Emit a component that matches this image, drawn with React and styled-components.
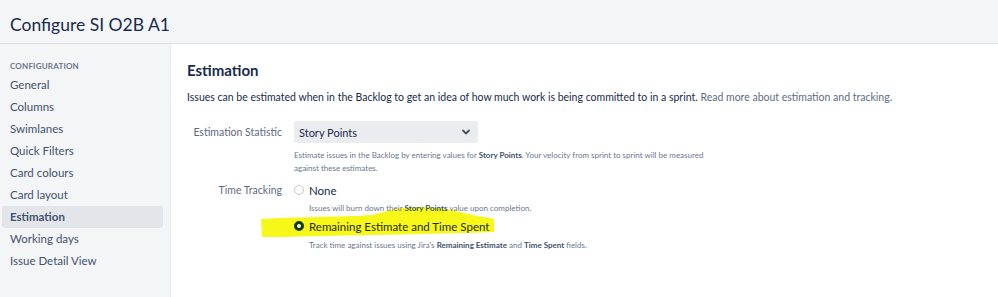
import React from 'react';
import styled, { createGlobalStyle } from 'styled-components';

const GlobalStyle = createGlobalStyle`
  html, body { margin: 0; padding: 0; }
  body {
    font-family: Lato, "Noto Sans", sans-serif;
    color: #172b4d;
    background: #fff;
  }
`;

const Page = styled.div`
  width: 998px;
  height: 297px;
  display: flex;
  flex-direction: column;
  overflow: hidden;
`;

const Header = styled.div`
  height: 44px;
  background: #f4f5f7;
  border-bottom: 1px solid #dfe1e6;
  display: flex;
  align-items: center;
  padding: 0 10px;
  box-sizing: border-box;
`;

const Title = styled.h1`
  margin: 0;
  font-size: 17.5px;
  font-weight: 400;
  color: #172b4d;
  padding-top: 6px;
`;

const Body = styled.div`
  flex: 1;
  display: flex;
`;

const Sidebar = styled.div`
  width: 171px;
  background: #f4f5f7;
  border-right: 1px solid #ebecf0;
  padding: 17px 7px 0 2px;
  box-sizing: border-box;
`;

const SideHeading = styled.div`
  font-size: 8px;
  font-weight: 700;
  color: #6b778c;
  padding-left: 8px;
  margin-bottom: 3px;
  letter-spacing: 0.2px;
`;

const SideItem = styled.div`
  height: 22px;
  line-height: 22px;
  font-size: 11.5px;
  padding-left: 8px;
  border-radius: 3px;
  color: #42526e;
  font-weight: ${(p) => (p.active ? 700 : 400)};
  background: ${(p) => (p.active ? '#e4e5ea' : 'transparent')};
`;

const Main = styled.div`
  flex: 1;
  position: relative;
  padding: 15px 0 0 16px;
`;

const Heading = styled.h2`
  margin: 0;
  font-size: 15px;
  font-weight: 700;
  color: #172b4d;
  line-height: 22px;
`;

const Intro = styled.p`
  margin: 8px 0 0;
  font-size: 10.5px;
  line-height: 16px;
  color: #172b4d;
`;

const Muted = styled.span`
  color: #5e6c84;
`;

const Form = styled.div`
  margin-top: 16px;
  display: grid;
  grid-template-columns: 95px 1fr;
  column-gap: 12px;
  row-gap: 4px;
`;

const Label = styled.div`
  text-align: right;
  font-size: 10.5px;
  color: #5e6c84;
  line-height: 22px;
`;

const Field = styled.div`
  display: flex;
  flex-direction: column;
`;

const Select = styled.div`
  width: 184px;
  height: 22px;
  background: #ebecf0;
  border-radius: 3px;
  display: flex;
  align-items: center;
  justify-content: space-between;
  padding: 0 7px 0 5px;
  box-sizing: border-box;
  font-size: 11px;
  color: #172b4d;
`;

const Help = styled.div`
  font-size: 8px;
  line-height: 13px;
  color: #6b778c;
  margin-top: ${(p) => p.top || 4}px;
  padding-left: ${(p) => p.indent || 0}px;
  max-width: 440px;
  position: relative;
  z-index: 1;
  b { color: #42526e; font-weight: 700; }
`;

const RadioRow = styled.label`
  display: flex;
  align-items: center;
  gap: 5px;
  height: 22px;
  font-size: 11.5px;
  color: ${(p) => (p.marked ? '#1d2b12' : '#172b4d')};
  position: relative;
  z-index: 1;
`;

const Radio = styled.span`
  width: 10px;
  height: 10px;
  border-radius: 50%;
  box-sizing: border-box;
  border: ${(p) => (p.checked ? '3px solid #143a10' : '1px solid #c1c7d0')};
  background: ${(p) => (p.checked ? '#fdfdd0' : '#fff')};
`;

const Marker = styled.svg`
  position: absolute;
  left: 90px;
  top: 162px;
  width: 234px;
  height: 32px;
  pointer-events: none;
  z-index: 0;
`;

const Chevron = () => (
  <svg width="10" height="10" viewBox="0 0 10 10">
    <path d="M2 3.5 L5 6.5 L8 3.5" fill="none" stroke="#42526e" strokeWidth="1.8" strokeLinecap="round" strokeLinejoin="round" />
  </svg>
);

const items = [
  'General',
  'Columns',
  'Swimlanes',
  'Quick Filters',
  'Card colours',
  'Card layout',
  'Estimation',
  'Working days',
  'Issue Detail View',
];

export default function App() {
  return (
    <Page>
      <GlobalStyle />
      <Header>
        <Title>Configure SI O2B A1</Title>
      </Header>
      <Body>
        <Sidebar>
          <SideHeading>CONFIGURATION</SideHeading>
          {items.map((item) => (
            <SideItem key={item} active={item === 'Estimation'}>
              {item}
            </SideItem>
          ))}
        </Sidebar>
        <Main>
          <Marker viewBox="0 0 234 32">
            <path
              d="M0 13 C30 11 80 11 112 9 C128 4 140 1 160 1 C180 1 200 6 216 10 C224 11 230 12 233 13 L233 26 C200 27 130 29 60 30 C30 31 10 31 1 31 Z"
              fill="#f7f71a"
            />
          </Marker>
          <Heading>Estimation</Heading>
          <Intro>
            Issues can be estimated when in the Backlog to get an idea of how much work is being committed to in a sprint.{' '}
            <Muted>Read more about estimation and tracking.</Muted>
          </Intro>
          <Form>
            <Label>Estimation Statistic</Label>
            <Field>
              <Select>
                <span>Story Points</span>
                <Chevron />
              </Select>
              <Help top={6}>
                Estimate issues in the Backlog by entering values for <b>Story Points</b>. Your velocity from sprint to sprint will be measured
                <br />
                against these estimates.
              </Help>
            </Field>
            <Label>Time Tracking</Label>
            <Field>
              <RadioRow>
                <Radio />
                None
              </RadioRow>
              <Help indent={15} top={1}>
                Issues will burn down their <b>Story Points</b> value upon completion.
              </Help>
              <RadioRow marked>
                <Radio checked />
                Remaining Estimate and Time Spent
              </RadioRow>
              <Help indent={15} top={2}>
                Track time against issues using Jira's <b>Remaining Estimate</b> and <b>Time Spent</b> fields.
              </Help>
            </Field>
          </Form>
        </Main>
      </Body>
    </Page>
  );
}
